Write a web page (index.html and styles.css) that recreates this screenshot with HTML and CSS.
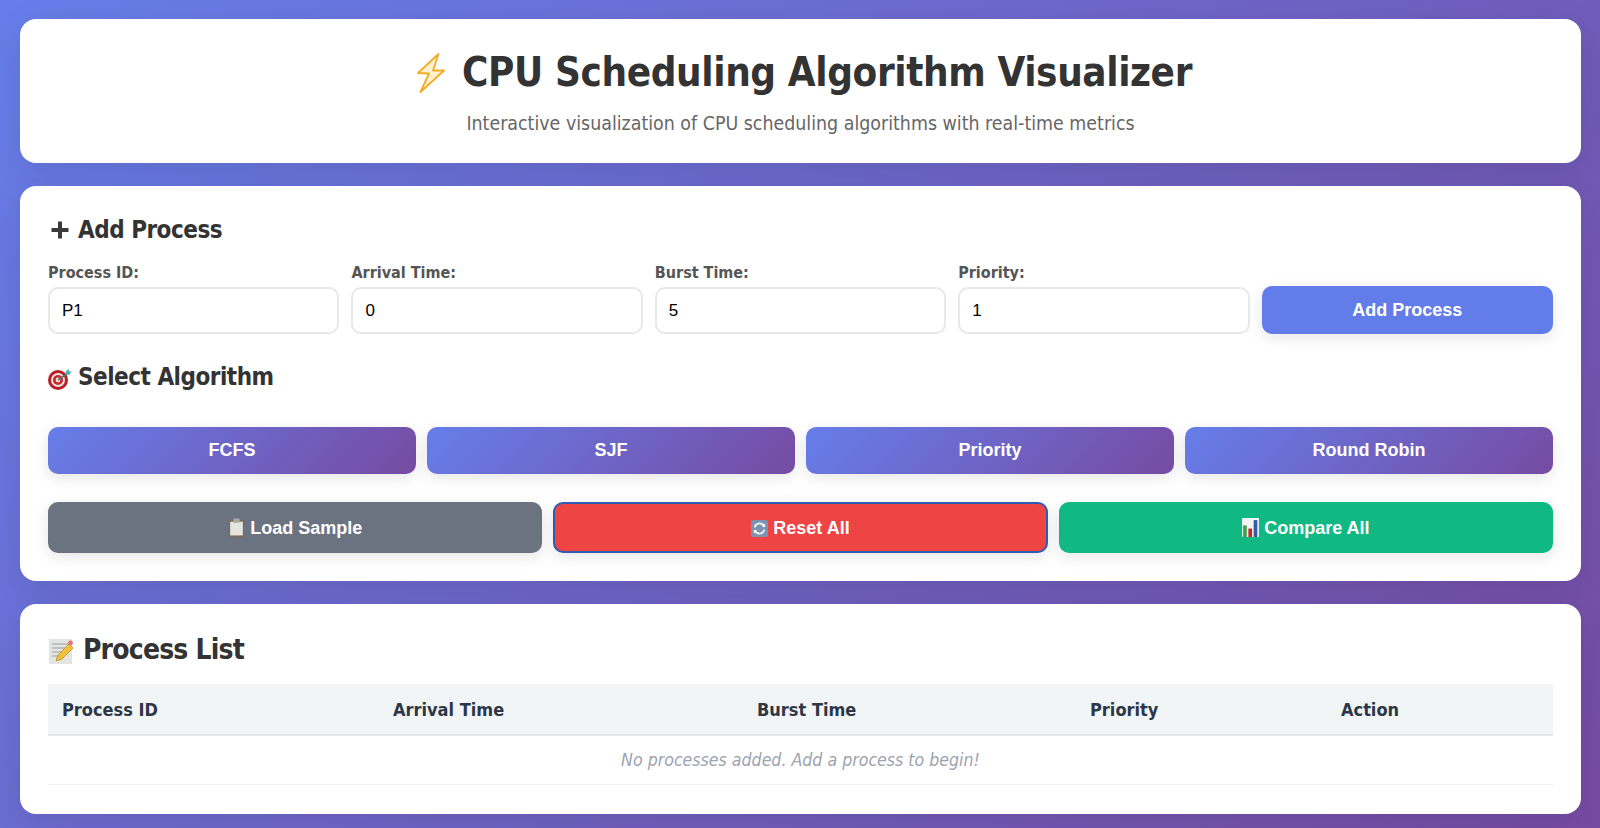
FILE: index.html
```html
<!DOCTYPE html>
<html lang="en">

<head>
    <meta charset="UTF-8">
    <meta name="viewport" content="width=device-width, initial-scale=1.0">
    <title>CPU Scheduling Algorithm Visualizer</title>
    <link rel="stylesheet" href="styles.css">
</head>

<body>

    <div class="container">
        <header class="card header">
            <h1>
                <svg class="bolt" viewBox="0 0 28 40" width="28" height="40">
                    <path d="M21.5 1 L1 20 L12 20.5 L3.5 39 L27 17.5 L16 17.5 Z" fill="#fdf2cf" stroke="#f3ab26" stroke-width="1.8" stroke-linejoin="round"/>
                </svg>
                CPU Scheduling Algorithm Visualizer
            </h1>
            <p>Interactive visualization of CPU scheduling algorithms with real-time metrics</p>
        </header>

        <section class="card controls">
            <h3 class="add-title">
                <svg class="icon-plus" viewBox="0 0 18 18" width="18" height="18">
                    <path d="M7 0.5 H11 V7 H17.5 V11 H11 V17.5 H7 V11 H0.5 V7 H7 Z" fill="#3a3a3a"/>
                </svg>
                Add Process
            </h3>
            <div class="form-row">
                <div class="field">
                    <label for="process-id">Process ID:</label>
                    <input type="text" id="process-id" value="P1">
                </div>
                <div class="field">
                    <label for="arrival-time">Arrival Time:</label>
                    <input type="text" id="arrival-time" value="0">
                </div>
                <div class="field">
                    <label for="burst-time">Burst Time:</label>
                    <input type="text" id="burst-time" value="5">
                </div>
                <div class="field">
                    <label for="priority">Priority:</label>
                    <input type="text" id="priority" value="1">
                </div>
                <button class="btn btn-add">Add Process</button>
            </div>

            <h3 class="algo-title">
                <svg class="icon-target" viewBox="0 0 24 22" width="24" height="22">
                    <circle cx="10" cy="12" r="10" fill="#b81f26"/>
                    <circle cx="10" cy="12" r="7" fill="#f4e4de"/>
                    <circle cx="10" cy="12" r="5" fill="#c8282e"/>
                    <circle cx="10" cy="12" r="2.4" fill="#f4e4de"/>
                    <path d="M10 12 L20 5" stroke="#5f6d70" stroke-width="1.6"/>
                    <path d="M17 6 L18 3 L21 1 L21 3.5 L24 3.5 L21 7 Z" fill="#4fb3b5"/>
                </svg>
                Select Algorithm
            </h3>
            <div class="algo-row">
                <button class="btn btn-algo">FCFS</button>
                <button class="btn btn-algo">SJF</button>
                <button class="btn btn-algo">Priority</button>
                <button class="btn btn-algo">Round Robin</button>
            </div>
            <div class="action-row">
                <button class="btn btn-action btn-sample">
                    <svg viewBox="0 0 16 18" width="17" height="19">
                        <rect x="1" y="2" width="14" height="16" rx="1" fill="#7a6a4f"/>
                        <rect x="2" y="3.5" width="12" height="13" fill="#e6e6e0"/>
                        <rect x="5" y="0.5" width="6" height="4" rx="1" fill="#a9a9a4"/>
                    </svg>
                    Load Sample
                </button>
                <button class="btn btn-action btn-reset">
                    <svg viewBox="0 0 16 16" width="17" height="17">
                        <rect width="16" height="16" rx="2" fill="#7d93b2"/>
                        <path d="M3.5 7 A4.6 4.6 0 0 1 12 5.5 M12.5 9 A4.6 4.6 0 0 1 4 10.5" fill="none" stroke="#fff" stroke-width="1.6"/>
                        <path d="M10.5 6.5 L13.5 6.5 L13 3 Z M5.5 9.5 L2.5 9.5 L3 13 Z" fill="#fff"/>
                    </svg>
                    Reset All
                </button>
                <button class="btn btn-action btn-compare">
                    <svg viewBox="0 0 16 18" width="17" height="19">
                        <rect width="16" height="18" fill="#f2f4f5"/>
                        <rect x="1" y="7" width="3.5" height="11" fill="#3fa34d"/>
                        <rect x="6" y="10" width="3.5" height="8" fill="#c8242b"/>
                        <rect x="11" y="2" width="3.5" height="16" fill="#2f5fa8"/>
                    </svg>
                    Compare All
                </button>
            </div>
        </section>

        <section class="card process-list">
            <h2>
                <svg viewBox="0 0 24 26" width="24" height="26">
                    <rect y="1" width="23" height="25" fill="#e4e4e2"/>
                    <path d="M3 6 H19 M3 10 H17 M3 14 H12 M3 18 H9" stroke="#9aa0a8" stroke-width="1"/>
                    <path d="M7 23 L9 17 L20 6 L24 10 L13 21 Z" fill="#f0c13c" stroke="#c48e1e" stroke-width="0.8"/>
                    <circle cx="21.5" cy="5" r="2.4" fill="#e8737a"/>
                </svg>
                Process List
            </h2>
            <table>
                <thead>
                    <tr>
                        <th>Process ID</th>
                        <th>Arrival Time</th>
                        <th>Burst Time</th>
                        <th>Priority</th>
                        <th>Action</th>
                    </tr>
                </thead>
                <tbody>
                    <tr>
                        <td colspan="5" class="empty">No processes added. Add a process to begin!</td>
                    </tr>
                </tbody>
            </table>
        </section>
    </div>

</body>

</html>
```

FILE: styles.css
```css
* {
    margin: 0;
    padding: 0;
    box-sizing: border-box;
}

body {
    font-family: 'DejaVu Sans Condensed', 'DejaVu Sans', sans-serif;
    background: linear-gradient(135deg, #667eea 0%, #764ba2 100%);
    min-height: 100vh;
    padding: 19px 19px 15px 20px;
}

.container {
    display: flex;
    flex-direction: column;
    gap: 23px;
}

.card {
    background: white;
    border-radius: 16px;
    box-shadow: 0 8px 32px rgba(0, 0, 0, 0.1);
}

.header {
    height: 144px;
    text-align: center;
    padding-top: 26px;
}

.header h1 {
    font-size: 40px;
    line-height: 54px;
    letter-spacing: -0.4px;
    color: #333;
}

.bolt {
    vertical-align: -7px;
    margin: 0 5px 0 8px;
}

.header p {
    margin-top: 13px;
    font-size: 19.4px;
    line-height: 24px;
    color: #666;
}

.controls {
    padding: 28px 28px 28px;
}

h3 {
    font-size: 24px;
    line-height: 32px;
    letter-spacing: -0.5px;
    color: #333;
}

.icon-plus {
    vertical-align: -1px;
    margin: 0 2px 0 3px;
}

.form-row {
    display: flex;
    align-items: flex-end;
    gap: 12px;
    margin-top: 17px;
}

.field {
    flex: 1;
}

label {
    display: block;
    font-size: 16px;
    line-height: 20px;
    margin-bottom: 4px;
    font-weight: bold;
    color: #555;
}

input {
    width: 100%;
    height: 47px;
    padding: 0 12px;
    border: 2px solid #e8e8e8;
    border-radius: 10px;
    font-family: 'Liberation Sans', Arial, sans-serif;
    font-size: 17px;
    color: #000;
}

.btn {
    border: none;
    border-radius: 10px;
    color: white;
    font-family: 'Liberation Sans', Arial, sans-serif;
    font-weight: bold;
    font-size: 18px;
    box-shadow: 0 4px 15px rgba(0, 0, 0, 0.1);
    cursor: pointer;
}

.btn svg {
    vertical-align: -3px;
}

.btn-add {
    flex: 1;
    height: 48px;
    background: #627ce9;
}

.algo-title {
    margin-top: 27px;
}

.algo-title svg {
    vertical-align: -5px;
    margin-right: -1px;
}

.algo-row {
    display: grid;
    grid-template-columns: repeat(4, 1fr);
    gap: 11px;
    margin-top: 34px;
}

.btn-algo {
    height: 47px;
    background: linear-gradient(135deg, #667eea 0%, #764ba2 100%);
}

.action-row {
    display: grid;
    grid-template-columns: repeat(3, 1fr);
    gap: 11px;
    margin-top: 28px;
}

.btn-action {
    height: 51px;
    padding-top: 2px;
}

.btn-sample {
    background: #6b7280;
}

.btn-reset {
    background: #ef4444;
    border: 2px solid #2f5bb5;
}

.btn-compare {
    background: #10b981;
}

.process-list {
    padding: 27px 28px 29px;
}

.process-list h2 {
    font-size: 28px;
    line-height: 38px;
    letter-spacing: -0.8px;
    color: #333;
}

.process-list h2 svg {
    vertical-align: -5px;
    margin: 0 2px 0 1px;
}

table {
    width: 100%;
    table-layout: fixed;
    border-collapse: collapse;
    margin-top: 15px;
}

th {
    background: #f1f5f6;
    color: #2d3748;
    text-align: left;
    font-size: 18px;
    height: 51px;
    padding: 0 14px;
    border-bottom: 2px solid #e4e8ea;
}

th:nth-child(1) {
    width: 331px;
}

th:nth-child(2) {
    width: 364px;
}

th:nth-child(3) {
    width: 333px;
}

th:nth-child(4) {
    width: 251px;
}

.empty {
    height: 49px;
    text-align: center;
    font-style: italic;
    color: #9ca3af;
    font-size: 17.6px;
    border-bottom: 1px solid #f0f0f0;
}
```
